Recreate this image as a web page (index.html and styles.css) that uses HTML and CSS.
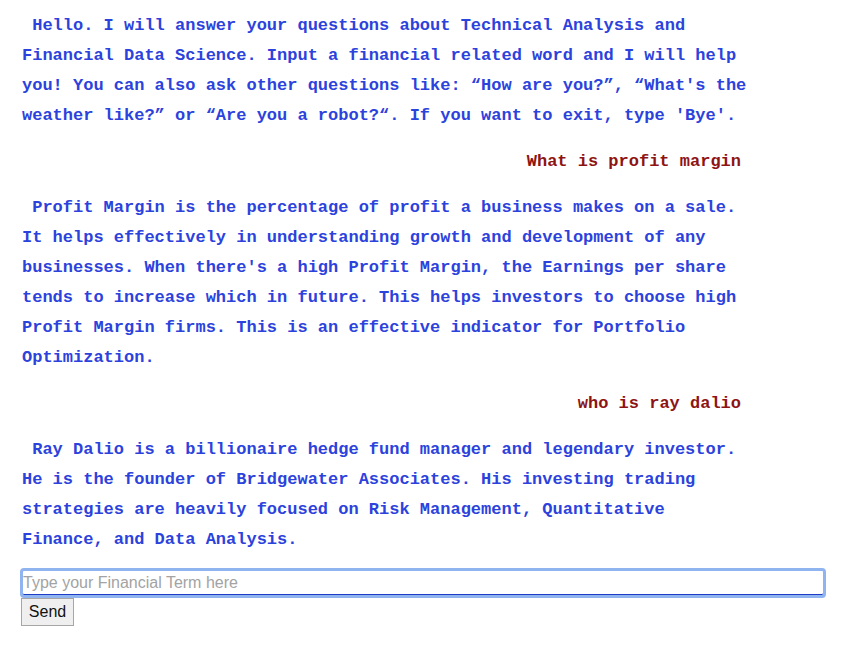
FILE: index.html
```html
<!DOCTYPE html>
<html lang="en">
<head>
<meta charset="utf-8">
<title>Financial Chatbot</title>
<link rel="stylesheet" href="styles.css">
</head>
<body>
<div class="chat">
  <div class="messages">
    <p class="msg bot">&nbsp;Hello. I will answer your questions about Technical Analysis and Financial Data Science. Input a financial related word and I will help you! You can also ask other questions like: “How are you?”, “What's the weather like?” or “Are you a robot?“. If you want to exit, type 'Bye'.</p>
    <p class="msg user">What is profit margin</p>
    <p class="msg bot">&nbsp;Profit Margin is the percentage of profit a business makes on a sale. It helps effectively in understanding growth and development of any businesses. When there's a high Profit Margin, the Earnings per share tends to increase which in future. This helps investors to choose high Profit Margin firms. This is an effective indicator for Portfolio Optimization.</p>
    <p class="msg user">who is ray dalio</p>
    <p class="msg bot">&nbsp;Ray Dalio is a billionaire hedge fund manager and legendary investor. He is the founder of Bridgewater Associates. His investing trading strategies are heavily focused on Risk Management, Quantitative Finance, and Data Analysis.</p>
  </div>
  <form class="composer">
    <input class="term" type="text" placeholder="Type your Financial Term here">
    <button class="send" type="button">Send</button>
  </form>
</div>
</body>
</html>
```

FILE: styles.css
```css
html, body {
  margin: 0;
  padding: 0;
  background: #ffffff;
}

.chat {
  padding: 11px 17px 0 20px;
}

.messages {
  display: flex;
  flex-direction: column;
  gap: 16px;
  width: 726px;
  margin-left: 2px;
}

.msg {
  margin: 0;
  font-family: "Liberation Mono", "Courier New", monospace;
  font-weight: bold;
  font-size: 17px;
  line-height: 30px;
}

.bot {
  color: #2c42dc;
  text-align: left;
}

.user {
  color: #8e1414;
  text-align: right;
  padding-right: 7px;
}

.composer {
  display: flex;
  flex-direction: column;
  align-items: flex-start;
  margin: 13px 0 0 0;
}

.term {
  box-sizing: border-box;
  width: 806px;
  height: 30px;
  margin: 0;
  padding: 0;
  border: 3px solid #8fb4ef;
  border-radius: 4px;
  box-shadow: inset 0 -1px 0 #1c3cc4;
  font-family: "Liberation Sans", Arial, sans-serif;
  font-size: 16px;
  color: #000;
  outline: none;
  background: #fff;
}

.term::placeholder {
  color: #a3a3a3;
}

.send {
  box-sizing: border-box;
  width: 53px;
  height: 28px;
  margin: 0 0 0 1px;
  padding: 0;
  border: 1px solid #a6a6a6;
  border-radius: 0;
  background: #efefef;
  font-family: "Liberation Sans", Arial, sans-serif;
  font-size: 16px;
  color: #111;
}
```
